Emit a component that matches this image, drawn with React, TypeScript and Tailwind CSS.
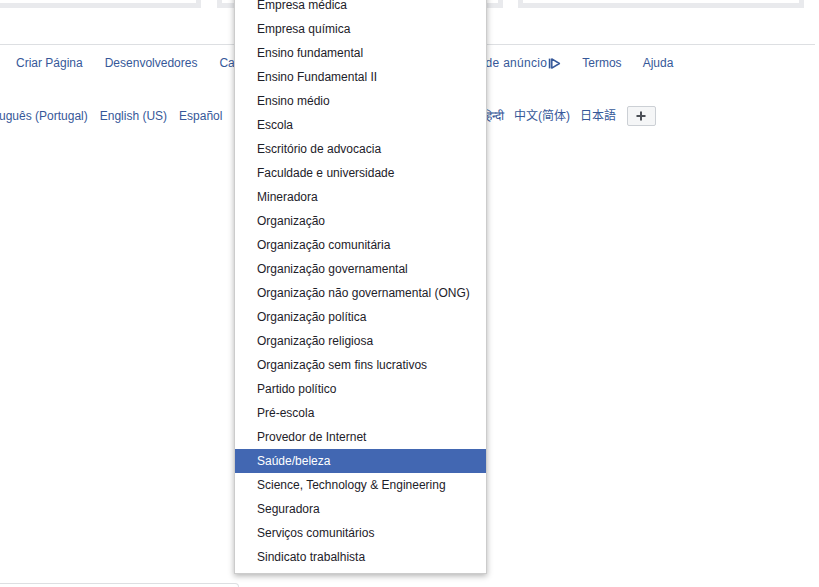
import React from "react";

const items = [
  "Empresa médica",
  "Empresa química",
  "Ensino fundamental",
  "Ensino Fundamental II",
  "Ensino médio",
  "Escola",
  "Escritório de advocacia",
  "Faculdade e universidade",
  "Mineradora",
  "Organização",
  "Organização comunitária",
  "Organização governamental",
  "Organização não governamental (ONG)",
  "Organização política",
  "Organização religiosa",
  "Organização sem fins lucrativos",
  "Partido político",
  "Pré-escola",
  "Provedor de Internet",
  "Saúde/beleza",
  "Science, Technology & Engineering",
  "Seguradora",
  "Serviços comunitários",
  "Sindicato trabalhista",
];

export default function App() {
  return (
    <div
      className="relative w-[819px] h-[587px] overflow-hidden bg-white text-[12px] leading-[16px]"
      style={{ fontFamily: '"Liberation Sans", Arial, "Noto Sans CJK SC", sans-serif' }}
    >
      {/* top cards */}
      <div className="flex h-[8px] items-end">
        <div className="ml-[-10px] h-[30px] w-[211px] border-[5px] border-t-0 border-[#e9eaed] bg-white" />
        <div className="ml-[16px] h-[30px] w-[286px] border-[5px] border-t-0 border-[#e9eaed] bg-white" />
        <div className="ml-[15px] h-[30px] w-[286px] border-[5px] border-t-0 border-[#e9eaed] bg-white" />
      </div>

      {/* footer */}
      <div className="mt-[36px] w-[815px] border-t border-[#dddfe2]">
        <div className="flex items-center pl-[16px] pt-[10px] text-[#365899] whitespace-nowrap">
          <span>Criar Página</span>
          <span className="ml-[22px]">Desenvolvedores</span>
          <span className="ml-[22px]">Carreiras</span>
          <span className="ml-[22px]">Privacidade</span>
          <span className="ml-[17px]">Cookies</span>
          <span className="ml-[17px] flex items-center">
            <span className="tracking-[0.3px]">Escolhas de anúncio</span>
            <svg width="13" height="13" viewBox="0 0 12 12" className="ml-[1px]">
              <path d="M1.5 1.5 V10.5" stroke="#365899" strokeWidth="1.6" fill="none" />
              <path d="M3.5 1.8 L10.5 6 L3.5 10.2 Z" stroke="#365899" strokeWidth="1.4" fill="none" strokeLinejoin="round" />
            </svg>
          </span>
          <span className="ml-[21px]">Termos</span>
          <span className="ml-[21px]">Ajuda</span>
        </div>
        <div className="mt-[35px] flex items-center ml-[-23px] text-[#365899] whitespace-nowrap">
          <span>Português (Portugal)</span>
          <span className="ml-[12px]">English (US)</span>
          <span className="ml-[12px]">Español</span>
          <span className="ml-[12px]">Français (France)</span>
          <span className="ml-[12px]">Italiano</span>
          <span className="ml-[12px]">Deutsch</span>
          <span className="ml-[6px]">العربية</span>
          <span className="ml-[8px]">हिन्दी</span>
          <span className="ml-[10px]">中文(简体)</span>
          <span className="ml-[10px]">日本語</span>
          <span className="ml-[11px] flex h-[20px] w-[29px] items-center justify-center rounded-[2px] border border-[#ccd0d5] bg-[#f5f6f7] text-[#4b4f56]">
            <svg width="12" height="12" viewBox="0 0 12 12">
              <path d="M6 1.5 V10.5 M1.5 6 H10.5" stroke="#4b4f56" strokeWidth="2" />
            </svg>
          </span>
        </div>
      </div>

      {/* bottom chat tab */}
      <div className="absolute left-0 top-[583px] h-[20px] w-[239px] rounded-tr-[4px] border border-l-0 border-[#dddfe2] bg-white" />

      {/* dropdown */}
      <div className="absolute left-[234px] top-[-12px] w-[253px] border border-black/20 bg-white pt-[4px] pb-[4px] shadow-[0_2px_6px_rgba(0,0,0,0.3)]">
        {items.map((it) => {
          const sel = it === "Saúde/beleza";
          return (
            <div
              key={it}
              className={
                sel
                  ? "flex h-[24px] items-center pl-[22px] bg-[#4267b2] text-white"
                  : "flex h-[24px] items-center pl-[22px] text-[#1d2129]"
              }
            >
              {it}
            </div>
          );
        })}
      </div>
    </div>
  );
}
